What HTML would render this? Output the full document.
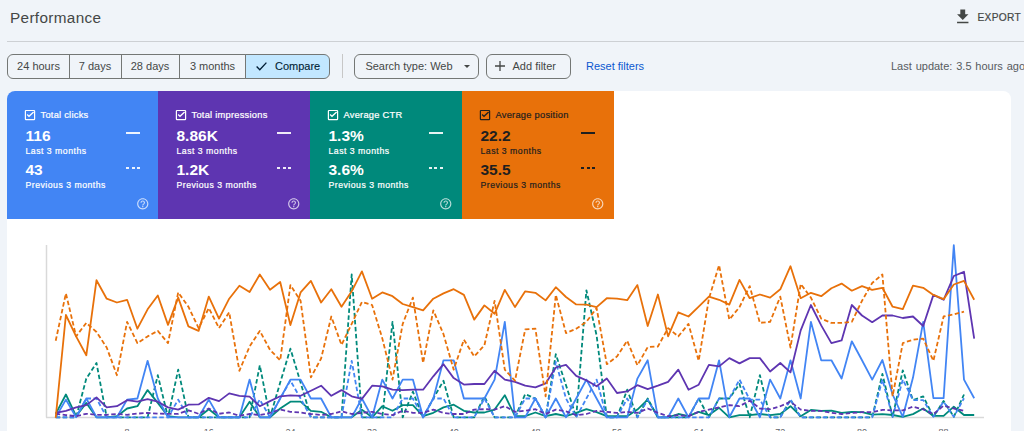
<!DOCTYPE html>
<html><head><meta charset="utf-8">
<style>
*{box-sizing:border-box;margin:0;padding:0}
html,body{width:1024px;height:431px;overflow:hidden;background:#f0f4f9;font-family:"Liberation Sans",sans-serif;color:#1f1f1f}
.abs{position:absolute}
#title{left:10px;top:9px;font-size:15.3px;color:#444746;letter-spacing:0.35px}
#hr{left:7px;top:41px;width:1017px;height:1px;background:#cdd0d4}
#export{left:977.5px;top:11.5px;font-size:10.2px;color:#444746;letter-spacing:0.3px;-webkit-text-stroke:0.2px #444746}
.seg{position:absolute;top:54.3px;height:24.4px;border:1px solid #747775;font-size:11px;color:#444746;display:flex;align-items:center;justify-content:center}
.btn{position:absolute;top:54.3px;height:24.4px;border:1px solid #747775;border-radius:6px;font-size:11px;color:#444746;display:flex;align-items:center;justify-content:center}
#reset{left:586px;top:60px;font-size:11px;color:#0b57d0}
#lastupd{left:891px;top:60px;font-size:11px;color:#575b5f;white-space:nowrap;letter-spacing:0px;word-spacing:0.8px}
#panel{left:7px;top:91px;width:1004px;height:400px;background:#fff;border-radius:8px;overflow:hidden}
.card{position:absolute;top:91px;height:128px;width:152px;color:#fff}
.card .chk{position:absolute;left:16.5px;top:17.5px}
.card .lbl{position:absolute;left:33.5px;top:18.5px;font-size:9.3px;letter-spacing:0.25px;-webkit-text-stroke:0.22px currentColor;white-space:nowrap}
.card .v1{position:absolute;left:18.5px;top:35.5px;font-size:15.5px;font-weight:bold}
.card .s1{position:absolute;left:18.5px;top:55px;font-size:8.7px;letter-spacing:0.5px;-webkit-text-stroke:0.22px currentColor;white-space:nowrap}
.card .v2{position:absolute;left:18.5px;top:70px;font-size:15.5px;font-weight:bold}
.card .s2{position:absolute;left:18.5px;top:89px;font-size:8.7px;letter-spacing:0.5px;-webkit-text-stroke:0.22px currentColor;white-space:nowrap}
.card .ln{position:absolute;left:119px;top:41px;width:14px;height:2px;background:rgba(255,255,255,.9)}
.card .dl{position:absolute;left:119px;top:76px;width:14px;height:2px;background:repeating-linear-gradient(90deg,rgba(255,255,255,.9) 0 3px,transparent 3px 5.5px)}
.card .q{position:absolute;left:128.75px;top:105.85px}
</style></head><body>
<div class="abs" id="title">Performance</div>
<svg class="abs" width="19.5" height="19.5" viewBox="0 0 24 24" style="left:952.5px;top:6.9px"><path d="M5 20h14v-2H5v2zM19 9h-4V3H9v6H5l7 7 7-7z" fill="#444746"/></svg><div class="abs" id="export">EXPORT</div>
<div class="abs" id="hr"></div>

<div class="seg" style="left:7px;width:63px;border-radius:6px 0 0 6px">24 hours</div>
<div class="seg" style="left:69px;width:53px;border-left:none;border-right:1px solid #747775">7 days</div>
<div class="seg" style="left:121px;width:59px;border-left:none">28 days</div>
<div class="seg" style="left:179px;width:67px">3 months</div>
<div class="seg" style="left:245px;width:85px;border-radius:0 6px 6px 0;background:#c2e7ff;color:#001d35;-webkit-text-stroke:0.1px #001d35"><svg width="26" height="24" viewBox="0 0 26 24" style="position:absolute;left:-1px;top:-1px"><path d="M11.6 12.6L14.8 15.7L21.4 8.6" fill="none" stroke="#001d35" stroke-width="1.35"/></svg><span style="position:absolute;left:29px;top:5px">Compare</span></div>
<div class="abs" style="left:342px;top:54px;width:1px;height:24px;background:#c7c7c7"></div>
<div class="btn" style="left:354px;width:125px">Search type: Web <span style="display:inline-block;margin-left:11px;margin-right:-2px;width:0;height:0;border-left:3px solid transparent;border-right:3px solid transparent;border-top:3px solid #444746"></span></div>
<div class="btn" style="left:486px;width:85px"><svg width="12" height="12" viewBox="0 0 12 12" style="position:absolute;left:7.4px;top:5px"><path d="M6 1v10M1 6h10" stroke="#444746" stroke-width="1.3"/></svg><span style="position:absolute;left:25.5px;top:5px">Add filter</span></div>
<div class="abs" id="reset">Reset filters</div>
<div class="abs" id="lastupd">Last update: 3.5 hours ago</div>

<div class="abs" id="panel"></div>

<div class="card" style="left:7px;width:151px;background:#4285f4;border-top-left-radius:8px">
 <svg class="chk" width="12" height="12" viewBox="0 0 12 12"><rect x="1.4" y="1.5" width="9.2" height="9.1" rx="0.6" fill="none" stroke="#fff" stroke-width="1.2"/><path d="M3.1 5.6L5 7.3L9.6 3.1" fill="none" stroke="#fff" stroke-width="1.3"/></svg><div class="lbl">Total clicks</div>
 <div class="v1">116</div><div class="s1">Last 3 months</div>
 <div class="v2">43</div><div class="s2">Previous 3 months</div>
 <div class="ln"></div><div class="dl"></div><svg class="q" width="13.5" height="13.5" viewBox="0 0 24 24"><path fill="rgba(255,255,255,.72)" d="M11 18h2v-2h-2v2zm1-16C6.48 2 2 6.48 2 12s4.48 10 10 10 10-4.48 10-10S17.52 2 12 2zm0 18c-4.41 0-8-3.59-8-8s3.59-8 8-8 8 3.59 8 8-3.59 8-8 8zm0-14c-2.21 0-4 1.79-4 4h2c0-1.1.9-2 2-2s2 .9 2 2c0 2-3 1.75-3 5h2c0-2.25 3-2.5 3-5 0-2.21-1.79-4-4-4z"/></svg>
</div>
<div class="card" style="left:158px;background:#5e35b1">
 <svg class="chk" width="12" height="12" viewBox="0 0 12 12"><rect x="1.4" y="1.5" width="9.2" height="9.1" rx="0.6" fill="none" stroke="#fff" stroke-width="1.2"/><path d="M3.1 5.6L5 7.3L9.6 3.1" fill="none" stroke="#fff" stroke-width="1.3"/></svg><div class="lbl">Total impressions</div>
 <div class="v1">8.86K</div><div class="s1">Last 3 months</div>
 <div class="v2">1.2K</div><div class="s2">Previous 3 months</div>
 <div class="ln"></div><div class="dl"></div><svg class="q" width="13.5" height="13.5" viewBox="0 0 24 24"><path fill="rgba(255,255,255,.72)" d="M11 18h2v-2h-2v2zm1-16C6.48 2 2 6.48 2 12s4.48 10 10 10 10-4.48 10-10S17.52 2 12 2zm0 18c-4.41 0-8-3.59-8-8s3.59-8 8-8 8 3.59 8 8-3.59 8-8 8zm0-14c-2.21 0-4 1.79-4 4h2c0-1.1.9-2 2-2s2 .9 2 2c0 2-3 1.75-3 5h2c0-2.25 3-2.5 3-5 0-2.21-1.79-4-4-4z"/></svg>
</div>
<div class="card" style="left:310px;background:#00897b">
 <svg class="chk" width="12" height="12" viewBox="0 0 12 12"><rect x="1.4" y="1.5" width="9.2" height="9.1" rx="0.6" fill="none" stroke="#fff" stroke-width="1.2"/><path d="M3.1 5.6L5 7.3L9.6 3.1" fill="none" stroke="#fff" stroke-width="1.3"/></svg><div class="lbl">Average CTR</div>
 <div class="v1">1.3%</div><div class="s1">Last 3 months</div>
 <div class="v2">3.6%</div><div class="s2">Previous 3 months</div>
 <div class="ln"></div><div class="dl"></div><svg class="q" width="13.5" height="13.5" viewBox="0 0 24 24"><path fill="rgba(255,255,255,.72)" d="M11 18h2v-2h-2v2zm1-16C6.48 2 2 6.48 2 12s4.48 10 10 10 10-4.48 10-10S17.52 2 12 2zm0 18c-4.41 0-8-3.59-8-8s3.59-8 8-8 8 3.59 8 8-3.59 8-8 8zm0-14c-2.21 0-4 1.79-4 4h2c0-1.1.9-2 2-2s2 .9 2 2c0 2-3 1.75-3 5h2c0-2.25 3-2.5 3-5 0-2.21-1.79-4-4-4z"/></svg>
</div>
<div class="card" style="left:462px;width:151.5px;background:#e8710a;color:#1f1f1f">
 <svg class="chk" width="12" height="12" viewBox="0 0 12 12"><rect x="1.4" y="1.5" width="9.2" height="9.1" rx="0.6" fill="none" stroke="#1f1f1f" stroke-width="1.2"/><path d="M3.1 5.6L5 7.3L9.6 3.1" fill="none" stroke="#1f1f1f" stroke-width="1.3"/></svg><div class="lbl">Average position</div>
 <div class="v1">22.2</div><div class="s1">Last 3 months</div>
 <div class="v2">35.5</div><div class="s2">Previous 3 months</div>
 <div class="ln" style="background:#1f1f1f"></div><div class="dl" style="background:repeating-linear-gradient(90deg,#1f1f1f 0 3px,transparent 3px 5.5px)"></div><svg class="q" width="13.5" height="13.5" viewBox="0 0 24 24"><path fill="rgba(255,255,255,.72)" d="M11 18h2v-2h-2v2zm1-16C6.48 2 2 6.48 2 12s4.48 10 10 10 10-4.48 10-10S17.52 2 12 2zm0 18c-4.41 0-8-3.59-8-8s3.59-8 8-8 8 3.59 8 8-3.59 8-8 8zm0-14c-2.21 0-4 1.79-4 4h2c0-1.1.9-2 2-2s2 .9 2 2c0 2-3 1.75-3 5h2c0-2.25 3-2.5 3-5 0-2.21-1.79-4-4-4z"/></svg>
</div>

<svg class="abs" style="left:0;top:0" width="1024" height="431" viewBox="0 0 1024 431">
<line x1="46.5" y1="245" x2="46.5" y2="417.5" stroke="#d9d9d9" stroke-width="1.5"/>
<line x1="46" y1="417.5" x2="984" y2="417.5" stroke="#d9d9d9" stroke-width="1.5"/>
<polyline fill="none" stroke="#00897b" stroke-width="1.8" stroke-linejoin="round" stroke-dasharray="4.5,2.5" points="55.7,417.3 65.9,417.3 76.1,417.3 86.3,378.6 96.5,363.0 106.7,417.3 116.9,417.3 127.1,417.3 137.4,417.3 147.6,417.3 157.8,375.2 168.0,417.3 178.2,369.6 188.4,417.3 198.6,417.3 208.8,417.3 219.0,417.3 229.2,417.3 239.4,417.3 249.6,417.3 259.8,365.3 270.0,417.3 280.2,382.6 290.4,348.7 300.6,382.6 310.9,417.3 321.1,417.3 331.3,417.3 341.5,417.3 351.7,274.5 361.9,417.3 372.1,417.3 382.3,417.3 392.5,321.8 402.7,417.3 412.9,391.7 423.1,417.3 433.3,398.5 443.5,380.7 453.7,417.3 463.9,417.3 474.2,417.3 484.4,396.3 494.6,417.3 504.8,417.3 515.0,417.3 525.2,394.1 535.4,398.5 545.6,417.3 555.8,354.2 566.0,385.2 576.2,417.3 586.4,290.3 596.6,335.4 606.8,417.3 617.0,417.3 627.2,389.7 637.4,417.3 647.7,398.5 657.9,417.3 668.1,417.3 678.3,417.3 688.5,417.3 698.7,398.5 708.9,417.3 719.1,398.5 729.3,398.5 739.5,384.0 749.7,417.3 759.9,375.2 770.1,417.3 780.3,417.3 790.5,399.6 800.7,417.3 810.9,417.3 821.2,417.3 831.4,417.3 841.6,417.3 851.8,417.3 862.0,417.3 872.2,417.3 882.4,374.0 892.6,416.8 902.8,370.3 913.0,400.1 923.2,396.4 933.4,416.8 943.6,401.0 953.8,416.8 964.0,394.5"/>
<polyline fill="none" stroke="#00897b" stroke-width="1.8" stroke-linejoin="round" points="55.7,413.8 65.9,394.5 76.1,416.2 86.3,402.9 96.5,417.3 106.7,417.3 116.9,416.2 127.1,408.5 137.4,406.2 147.6,390.1 157.8,402.9 168.0,416.2 178.2,417.3 188.4,417.3 198.6,417.3 208.8,409.2 219.0,417.3 229.2,417.3 239.4,417.3 249.6,401.7 259.8,417.3 270.0,417.3 280.2,408.5 290.4,401.7 300.6,401.7 310.9,410.8 321.1,411.8 331.3,417.3 341.5,417.3 351.7,417.3 361.9,409.6 372.1,417.3 382.3,406.2 392.5,410.8 402.7,405.1 412.9,405.1 423.1,416.2 433.3,412.8 443.5,407.4 453.7,404.7 463.9,410.8 474.2,412.5 484.4,412.5 494.6,409.6 504.8,395.2 515.0,416.2 525.2,416.2 535.4,412.5 545.6,416.2 555.8,414.0 566.0,416.2 576.2,412.9 586.4,409.2 596.6,412.2 606.8,416.2 617.0,416.2 627.2,416.2 637.4,409.6 647.7,399.6 657.9,417.3 668.1,417.3 678.3,414.0 688.5,416.2 698.7,411.8 708.9,415.1 719.1,407.8 729.3,417.3 739.5,415.1 749.7,415.1 759.9,414.0 770.1,415.1 780.3,414.0 790.5,406.2 800.7,416.2 810.9,410.0 821.2,410.8 831.4,410.7 841.6,412.9 851.8,411.8 862.0,412.2 872.2,414.6 882.4,414.1 892.6,415.0 902.8,416.8 913.0,414.1 923.2,408.5 933.4,415.9 943.6,415.9 953.8,406.7 964.0,415.0 974.2,415.0"/>
<polyline fill="none" stroke="#4285f4" stroke-width="1.8" stroke-linejoin="round" stroke-dasharray="4.5,2.5" points="55.7,417.3 65.9,417.3 76.1,417.3 86.3,398.5 96.5,398.5 106.7,417.3 116.9,417.3 127.1,417.3 137.4,417.3 147.6,417.3 157.8,417.3 168.0,417.3 178.2,399.6 188.4,417.3 198.6,417.3 208.8,417.3 219.0,417.3 229.2,417.3 239.4,417.3 249.6,417.3 259.8,399.6 270.0,417.3 280.2,398.5 290.4,380.6 300.6,398.5 310.9,417.3 321.1,417.3 331.3,417.3 341.5,417.3 351.7,360.8 361.9,417.3 372.1,417.3 382.3,417.3 392.5,417.3 402.7,398.5 412.9,398.5 423.1,417.3 433.3,398.5 443.5,398.5 453.7,417.3 463.9,417.3 474.2,417.3 484.4,398.5 494.6,417.3 504.8,417.3 515.0,417.3 525.2,398.5 535.4,398.5 545.6,417.3 555.8,361.9 566.0,398.5 576.2,417.3 586.4,398.5 596.6,379.6 606.8,417.3 617.0,417.3 627.2,398.5 637.4,417.3 647.7,399.6 657.9,417.3 668.1,417.3 678.3,417.3 688.5,417.3 698.7,417.3 708.9,417.3 719.1,398.5 729.3,398.5 739.5,379.6 749.7,399.6 759.9,399.6 770.1,417.3 780.3,417.3 790.5,399.6 800.7,417.3 810.9,417.3 821.2,417.3 831.4,417.3 841.6,417.3 851.8,417.3 862.0,417.3 872.2,417.3 882.4,379.6 892.6,416.8 902.8,379.6 913.0,400.1 923.2,400.1 933.4,416.8 943.6,401.7 953.8,416.8 964.0,398.2"/>
<polyline fill="none" stroke="#4285f4" stroke-width="1.8" stroke-linejoin="round" points="55.7,417.3 65.9,399.6 76.1,417.3 86.3,398.5 96.5,417.3 106.7,417.3 116.9,417.3 127.1,399.6 137.4,398.5 147.6,360.8 157.8,398.5 168.0,417.3 178.2,417.3 188.4,417.3 198.6,417.3 208.8,399.6 219.0,417.3 229.2,417.3 239.4,417.3 249.6,379.6 259.8,417.3 270.0,417.3 280.2,398.5 290.4,379.6 300.6,379.6 310.9,398.5 321.1,398.5 331.3,417.3 341.5,417.3 351.7,417.3 361.9,398.5 372.1,417.3 382.3,379.6 392.5,398.5 402.7,379.6 412.9,379.6 423.1,417.3 433.3,398.5 443.5,360.3 453.7,360.3 463.9,398.5 474.2,398.5 484.4,398.5 494.6,379.6 504.8,321.8 515.0,417.3 525.2,417.3 535.4,398.5 545.6,417.3 555.8,398.5 566.0,417.3 576.2,398.5 586.4,379.6 596.6,398.5 606.8,417.3 617.0,417.3 627.2,417.3 637.4,378.6 647.7,360.3 657.9,417.3 668.1,417.3 678.3,398.5 688.5,417.3 698.7,398.5 708.9,398.5 719.1,360.3 729.3,417.3 739.5,398.5 749.7,398.5 759.9,417.3 770.1,379.6 780.3,398.5 790.5,360.3 800.7,398.5 810.9,321.8 821.2,360.3 831.4,360.3 841.6,378.5 851.8,341.3 862.0,360.3 872.2,379.6 882.4,360.0 892.6,394.5 902.8,416.8 913.0,377.6 923.2,321.8 933.4,398.2 943.6,398.2 953.8,245.2 964.0,379.6 974.2,398.2"/>
<polyline fill="none" stroke="#5e35b1" stroke-width="1.8" stroke-linejoin="round" stroke-dasharray="4.5,2.5" points="55.7,413.8 65.9,415.1 76.1,416.2 86.3,413.8 96.5,414.8 106.7,414.8 116.9,414.0 127.1,414.8 137.4,413.6 147.6,412.9 157.8,413.6 168.0,413.8 178.2,413.8 188.4,410.3 198.6,413.8 208.8,408.5 219.0,413.8 229.2,412.5 239.4,415.8 249.6,414.0 259.8,415.1 270.0,412.9 280.2,409.6 290.4,411.8 300.6,412.5 310.9,414.0 321.1,415.1 331.3,414.0 341.5,411.4 351.7,414.0 361.9,412.9 372.1,411.8 382.3,414.0 392.5,415.1 402.7,410.8 412.9,412.8 423.1,412.8 433.3,409.6 443.5,412.9 453.7,414.0 463.9,414.0 474.2,409.6 484.4,409.2 494.6,409.6 504.8,406.2 515.0,411.8 525.2,410.8 535.4,409.2 545.6,414.0 555.8,409.6 566.0,411.4 576.2,415.1 586.4,414.0 596.6,410.8 606.8,411.8 617.0,412.9 627.2,411.8 637.4,412.9 647.7,408.5 657.9,412.9 668.1,416.2 678.3,415.1 688.5,416.2 698.7,411.8 708.9,409.6 719.1,407.4 729.3,405.1 739.5,406.2 749.7,400.7 759.9,408.5 770.1,409.2 780.3,406.2 790.5,401.7 800.7,409.6 810.9,410.8 821.2,410.8 831.4,412.9 841.6,414.0 851.8,412.9 862.0,412.2 872.2,412.2 882.4,409.8 892.6,410.4 902.8,410.4 913.0,406.7 923.2,409.4 933.4,414.1 943.6,405.7 953.8,408.5 964.0,410.9"/>
<polyline fill="none" stroke="#5e35b1" stroke-width="1.8" stroke-linejoin="round" points="55.7,412.8 65.9,410.8 76.1,407.4 86.3,405.1 96.5,397.4 106.7,407.4 116.9,406.2 127.1,400.2 137.4,401.7 147.6,399.1 157.8,401.7 168.0,407.4 178.2,409.6 188.4,404.7 198.6,404.4 208.8,397.8 219.0,401.1 229.2,393.4 239.4,395.8 249.6,396.7 259.8,406.2 270.0,401.1 280.2,396.3 290.4,395.4 300.6,395.8 310.9,390.7 321.1,385.7 331.3,395.8 341.5,390.1 351.7,396.3 361.9,398.9 372.1,385.7 382.3,386.3 392.5,389.7 402.7,390.1 412.9,389.7 423.1,389.7 433.3,376.3 443.5,364.2 453.7,378.1 463.9,384.6 474.2,384.0 484.4,384.0 494.6,370.8 504.8,379.6 515.0,381.8 525.2,385.7 535.4,387.4 545.6,383.4 555.8,367.5 566.0,364.9 576.2,375.9 586.4,380.3 596.6,386.3 606.8,378.5 617.0,393.0 627.2,391.4 637.4,385.2 647.7,389.2 657.9,385.7 668.1,381.8 678.3,369.7 688.5,389.7 698.7,384.7 708.9,364.9 719.1,366.4 729.3,358.1 739.5,363.4 749.7,358.1 759.9,358.1 770.1,371.5 780.3,363.0 790.5,372.3 800.7,330.4 810.9,305.0 821.2,325.4 831.4,343.1 841.6,340.4 851.8,305.0 862.0,315.5 872.2,322.2 882.4,315.5 892.6,315.5 902.8,318.0 913.0,316.5 923.2,326.0 933.4,294.9 943.6,299.8 953.8,276.0 964.0,271.8 974.2,338.6"/>
<polyline fill="none" stroke="#e8710a" stroke-width="1.8" stroke-linejoin="round" stroke-dasharray="4.5,2.5" points="55.7,340.8 65.9,293.4 76.1,336.4 86.3,322.9 96.5,332.0 106.7,347.5 116.9,375.2 127.1,321.8 137.4,343.1 147.6,336.4 157.8,330.9 168.0,343.1 178.2,292.4 188.4,306.7 198.6,328.1 208.8,308.1 219.0,328.1 229.2,312.3 239.4,370.8 249.6,346.5 259.8,330.9 270.0,349.8 280.2,360.3 290.4,285.1 300.6,300.8 310.9,377.4 321.1,358.5 331.3,316.5 341.5,344.9 351.7,323.9 361.9,301.9 372.1,305.0 382.3,338.4 392.5,379.6 402.7,323.9 412.9,297.6 423.1,363.0 433.3,310.3 443.5,334.2 453.7,369.7 463.9,339.7 474.2,356.4 484.4,345.3 494.6,300.8 504.8,369.7 515.0,380.7 525.2,329.4 535.4,328.7 545.6,396.3 555.8,294.9 566.0,333.1 576.2,328.7 586.4,321.8 596.6,308.1 606.8,364.2 617.0,356.4 627.2,340.8 637.4,365.3 647.7,347.1 657.9,346.5 668.1,328.1 678.3,336.4 688.5,323.9 698.7,360.8 708.9,298.7 719.1,265.1 729.3,319.6 739.5,307.1 749.7,286.1 759.9,322.9 770.1,321.8 780.3,296.6 790.5,347.5 800.7,284.0 810.9,297.6 821.2,318.6 831.4,322.9 841.6,322.9 851.8,321.8 862.0,300.8 872.2,283.0 882.4,274.5 892.6,396.2 902.8,343.1 913.0,339.7 923.2,338.6 933.4,360.8 943.6,316.5 953.8,314.4 964.0,311.7"/>
<polyline fill="none" stroke="#e8710a" stroke-width="1.8" stroke-linejoin="round" points="55.7,417.8 65.9,315.0 76.1,336.4 86.3,355.3 96.5,280.2 106.7,298.7 116.9,302.5 127.1,299.8 137.4,328.7 147.6,309.3 157.8,295.5 168.0,324.9 178.2,297.6 188.4,326.4 198.6,330.9 208.8,296.6 219.0,318.6 229.2,298.7 239.4,285.7 249.6,292.0 259.8,274.5 270.0,289.7 280.2,282.0 290.4,325.0 300.6,292.4 310.9,280.9 321.1,302.5 331.3,289.2 341.5,306.7 351.7,291.3 361.9,271.4 372.1,298.7 382.3,292.4 392.5,296.2 402.7,304.0 412.9,307.1 423.1,310.3 433.3,298.7 443.5,293.4 453.7,289.2 463.9,294.9 474.2,319.6 484.4,305.4 494.6,313.8 504.8,289.9 515.0,307.1 525.2,291.3 535.4,292.8 545.6,300.4 555.8,287.2 566.0,297.0 576.2,304.4 586.4,304.6 596.6,307.1 606.8,298.2 617.0,298.7 627.2,300.2 637.4,285.1 647.7,326.0 657.9,294.5 668.1,336.4 678.3,312.3 688.5,316.5 698.7,306.7 708.9,296.6 719.1,299.8 729.3,304.6 739.5,279.9 749.7,298.2 759.9,294.5 770.1,297.6 780.3,289.3 790.5,266.2 800.7,298.2 810.9,292.8 821.2,296.2 831.4,288.2 841.6,283.6 851.8,290.7 862.0,286.1 872.2,289.9 882.4,287.8 892.6,306.7 902.8,309.2 913.0,285.7 923.2,287.8 933.4,294.9 943.6,299.2 953.8,284.5 964.0,280.9 974.2,299.8"/>
<text x="127.1" y="435" font-size="9" fill="#5f6368" text-anchor="middle" font-family="Liberation Sans">8</text>
<text x="208.8" y="435" font-size="9" fill="#5f6368" text-anchor="middle" font-family="Liberation Sans">16</text>
<text x="290.4" y="435" font-size="9" fill="#5f6368" text-anchor="middle" font-family="Liberation Sans">24</text>
<text x="372.1" y="435" font-size="9" fill="#5f6368" text-anchor="middle" font-family="Liberation Sans">32</text>
<text x="453.7" y="435" font-size="9" fill="#5f6368" text-anchor="middle" font-family="Liberation Sans">40</text>
<text x="535.4" y="435" font-size="9" fill="#5f6368" text-anchor="middle" font-family="Liberation Sans">48</text>
<text x="617.0" y="435" font-size="9" fill="#5f6368" text-anchor="middle" font-family="Liberation Sans">56</text>
<text x="698.7" y="435" font-size="9" fill="#5f6368" text-anchor="middle" font-family="Liberation Sans">64</text>
<text x="780.3" y="435" font-size="9" fill="#5f6368" text-anchor="middle" font-family="Liberation Sans">72</text>
<text x="862.0" y="435" font-size="9" fill="#5f6368" text-anchor="middle" font-family="Liberation Sans">80</text>
<text x="943.6" y="435" font-size="9" fill="#5f6368" text-anchor="middle" font-family="Liberation Sans">88</text>
</svg>
</body></html>
